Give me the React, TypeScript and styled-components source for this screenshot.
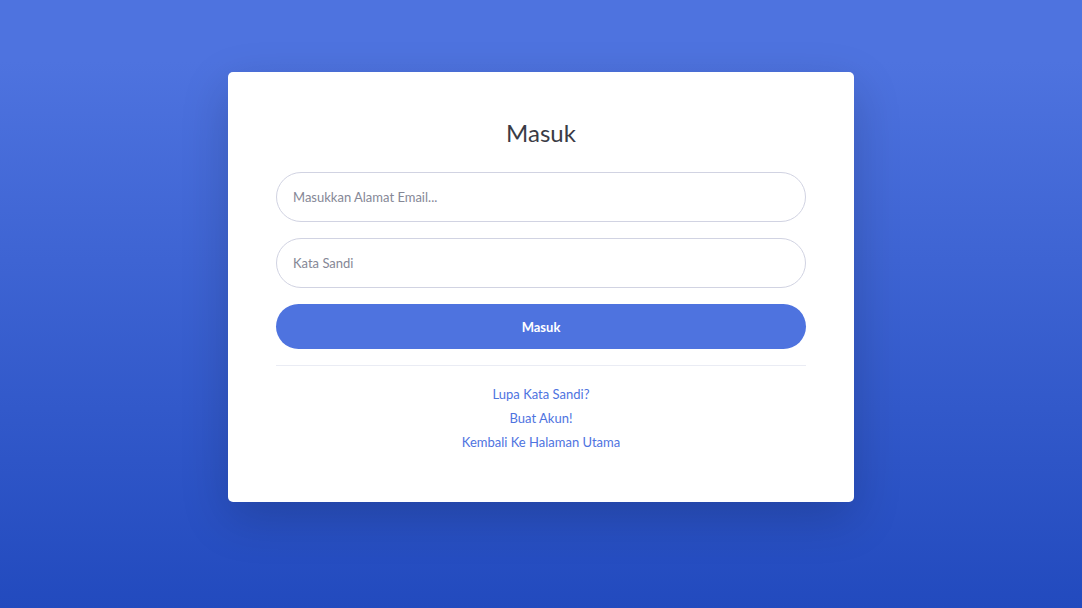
import React from "react";
import styled, { createGlobalStyle } from "styled-components";

const GlobalStyle = createGlobalStyle`
  html, body {
    margin: 0;
    padding: 0;
  }
  body {
    font-family: "Lato", "Open Sans", sans-serif;
    color: #858796;
  }
  * {
    box-sizing: border-box;
  }
`;

const App = () => {
  return (
    <Page>
      <GlobalStyle />
      <Card>
        <Title>Masuk</Title>
        <Form onSubmit={(e) => e.preventDefault()}>
          <Input type="email" placeholder="Masukkan Alamat Email..." />
          <Input type="password" placeholder="Kata Sandi" />
          <Button type="submit">Masuk</Button>
        </Form>
        <Divider />
        <Links>
          <LinkRow>
            <Link href="#">Lupa Kata Sandi?</Link>
          </LinkRow>
          <LinkRow>
            <Link href="#">Buat Akun!</Link>
          </LinkRow>
          <LinkRow>
            <Link href="#">Kembali Ke Halaman Utama</Link>
          </LinkRow>
        </Links>
      </Card>
    </Page>
  );
};

export default App;

const Page = styled.div`
  width: 100%;
  min-height: 608px;
  background: linear-gradient(180deg, #4e73df 10%, #224abe 100%);
  display: flex;
  justify-content: center;
  align-items: flex-start;
  padding-top: 72px;
`;

const Card = styled.div`
  width: 626px;
  background: #fff;
  border-radius: 5px;
  box-shadow: 0 16px 48px rgba(0, 0, 0, 0.175);
  padding: 48px;
`;

const Title = styled.h4`
  margin: 0 0 27px;
  text-align: center;
  font-size: 24px;
  font-weight: 400;
  line-height: 25px;
  color: #3a3b45;
`;

const Form = styled.form`
  display: flex;
  flex-direction: column;
  gap: 16px;
`;

const Input = styled.input`
  width: 100%;
  height: 50px;
  border: 1px solid #d1d3e2;
  border-radius: 25px;
  padding: 0 16px;
  font-family: inherit;
  font-size: 13px;
  color: #6e707e;
  outline: none;
  &::placeholder {
    color: #858796;
  }
`;

const Button = styled.button`
  width: 100%;
  height: 45px;
  border: none;
  border-radius: 23px;
  background: #4e73df;
  color: #fff;
  font-family: inherit;
  font-size: 13px;
  font-weight: 700;
  cursor: pointer;
`;

const Divider = styled.hr`
  margin: 16px 0;
  border: 0;
  border-top: 1px solid #eaecf4;
`;

const Links = styled.div`
  display: flex;
  flex-direction: column;
  align-items: center;
`;

const LinkRow = styled.div`
  font-size: 13px;
  line-height: 24px;
`;

const Link = styled.a`
  color: #4e73df;
  text-decoration: none;
`;
